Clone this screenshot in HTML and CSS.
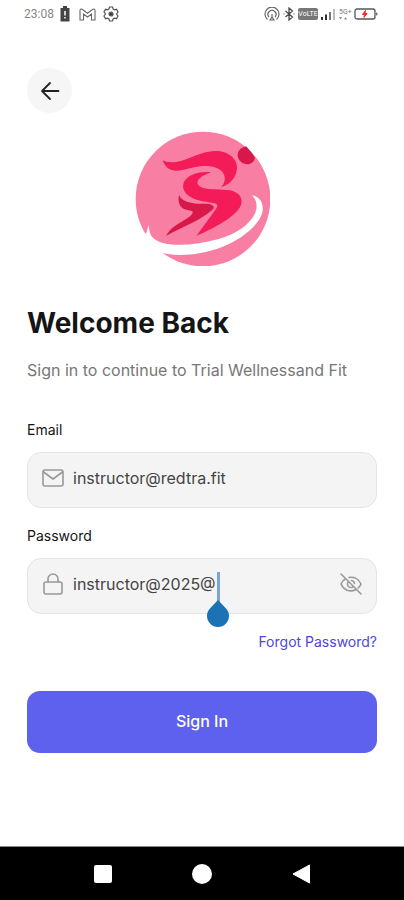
FILE: index.html
```html
<!DOCTYPE html>
<html lang="en">
<head>
    <meta charset="utf-8">
    <meta name="viewport" content="width=device-width, initial-scale=1">
    <title>Sign In</title>
    <link rel="stylesheet" href="styles.css">
</head>
<body>
    <div class="statusbar">
        <div class="status-group">
            <span class="clock">23:08</span>
            <svg width="10" height="16" viewBox="0 0 10 16"><path d="M3 0h4v2h2.500v13.500h-9V2H3z" fill="#444"/><path d="M5 5v4.500M5 11v1.500" stroke="#fff" stroke-width="1.500"/></svg>
            <svg class="mail-icon" width="17" height="13" viewBox="0 0 17 13" fill="none" stroke="#666" stroke-width="1.100"><path d="M1 12V2.500C1 1 2.500.6 3.500 1.500l5 3.700 5-3.700C14.500.6 16 1 16 2.500V12h-3.500V6l-4 3-4-3v6z"/></svg>
            <svg width="16" height="16" viewBox="0 0 16 16" fill="none" stroke="#555" stroke-width="1.200"><path d="M6.500 1h3l.6 2 1.400.8 2-.5L15 6l-1.500 2 1.500 2-1.500 2.700-2-.5-1.400.8-.6 2h-3l-.6-2-1.400-.8-2 .5L1 10l1.500-2L1 6l1.500-2.700 2 .5L5.900 3z"/><circle cx="8" cy="8" r="2" fill="#444"/></svg>
        </div>
        <div class="status-group status-right">
            <svg width="16" height="14" viewBox="0 0 16 14" fill="none" stroke="#666" stroke-width="1.200"><path d="M3.500 12.500a7 7 0 1 1 9 0M5 10a4 4 0 1 1 6 0"/><path d="M8 7v3M6 13l2-3 2 3z"/></svg>
            <svg width="12" height="14" viewBox="0 0 12 14" fill="none" stroke="#444" stroke-width="1.200"><path d="M2.500 4l7 6L6 13V1l3.500 3-7 6M.5 7h1M10.500 7h1"/></svg>
            <span class="volte">VoLTE</span>
            <svg width="15" height="12" viewBox="0 0 15 12"><path d="M0 9h2v3H0zM4 6.500h2V12H4z" fill="#333"/><path d="M8 4h2v8H8z" fill="#777"/><path d="M12 1h2v11h-2z" fill="#bbb"/></svg>
            <span class="network">5G+<svg width="8" height="4" viewBox="0 0 8 4" fill="#888"><path d="M0 1h3L1.500 3.500zM5 3.500h3L6.500 1z"/></svg></span>
            <svg width="25" height="12" viewBox="0 0 25 12"><rect x="1" y="1" width="20" height="10" rx="2" fill="#fff" stroke="#555" stroke-width="1.300"/><path d="M22 4l2 2-2 2z" fill="#777"/><path d="M11.500 2.500L8.500 6.500h2L10 9.500l3-4h-2z" fill="#f22" stroke="#f22"/></svg>
        </div>
    </div>

    <main class="page">
        <button class="back" type="button" aria-label="Back">
            <svg width="20" height="20" viewBox="0 0 20 20" fill="none" stroke="#222" stroke-width="1.800" stroke-linecap="round" stroke-linejoin="round"><path d="M18.500 10H2M10 2L2 10l8 8"/></svg>
        </button>

        <svg class="logo" viewBox="30 30 405 405" role="img" aria-label="Trial Wellness and Fit">
            <circle cx="234" cy="234" r="202" fill="#f87fa3"/>
            <!-- head -->
            <path d="M347 83C355 78 362 76 365 77Q382 95 390 111C388 123 376 131 364 130C349 128 339 117 338 103C338 94 341 87 347 83z" fill="#d81848"/>
            <!-- body -->
            <path d="M113 118C127 126 151 126 177 117C210 105 236 92 267 90C307 88 338 112 336 142C334 170 315 191 288 199C299 187 303 173 296 159C287 140 257 133 226 136C199 139 174 150 151 149C131 148 119 136 113 118z" fill="#f31b58"/>
            <path d="M257 154C243 152 211 153 189 169C171 183 169 204 185 219C202 237 236 242 266 246C281 249 279 258 269 269L214 345C261 324 324 293 345 259C357 236 346 214 315 208C287 203 254 207 233 200C213 193 214 180 226 170C235 162 246 160 257 154z" fill="#f31b58"/>
            <path d="M162 222C158 240 163 258 177 264C185 268 197 268 202 271C206 276 198 285 187 292C163 307 136 319 123 345C169 319 224 301 264 265C273 253 255 247 236 248C203 250 170 242 162 222z" fill="#d81848"/>
            <!-- orbit -->
            <path d="M381 223C402 225 416 244 413 269C408 306 357 352 291 378C223 404 149 408 107 394C79 382 61 360 64 337Q66 325 72 312C71 336 79 351 98 360C134 378 211 374 278 355C333 339 376 310 391 275C399 253 394 236 381 223z" fill="#fff"/>
            <path d="M30 337L64 337Q72 375 112 394L106 435H30z" fill="#fff"/>
        </svg>

        <h1 class="title">Welcome Back</h1>
        <p class="subtitle">Sign in to continue to Trial Wellnessand Fit</p>

        <form class="form">
            <label class="label" for="email">Email</label>
            <div class="field">
                <svg class="icon" viewBox="0 0 22 22"><rect x="1" y="3" width="20" height="16" rx="2"/><path d="M1.500 5l9.500 7 9.500-7"/></svg>
                <input class="input" id="email" type="email" value="instructor@redtra.fit">
            </div>

            <label class="label" for="password">Password</label>
            <div class="field">
                <svg class="icon" viewBox="0 0 22 22"><rect x="2" y="9" width="18" height="12" rx="2"/><path d="M6 9V6a5 5 0 0 1 10 0v3"/></svg>
                <input class="input" id="password" type="text" value="instructor@2025@">
                <button class="toggle" type="button" aria-label="Hide password">
                    <svg class="icon" viewBox="0 0 22 22"><path d="M1 1l20 20M9 4.500C14.500 3.500 19 6.500 21 11c-.6 1.500-1.600 2.900-2.800 4M5.500 5.800C3.500 7 2 8.800 1 11c2.500 6 9 8.500 14.500 5.800M8.500 8.500a3.500 3.500 0 0 0 5 5M11.500 7.500a3.500 3.500 0 0 1 3 3"/></svg>
                </button>
                <span class="caret"></span>
                <svg class="handle" viewBox="0 0 22 27"><path d="M11 0L18.800 8.200a11 11 0 1 1-15.600 0z" fill="#1b72b5"/></svg>
            </div>

            <a class="forgot" href="#">Forgot Password?</a>
            <button class="submit" type="submit">Sign In</button>
        </form>
    </main>

    <nav class="navbar">
        <button class="nav-btn" type="button" aria-label="Recent apps"><svg width="20" height="20" viewBox="0 0 20 20"><rect x="1" y="1" width="18" height="18" rx="2" fill="#fff"/></svg></button>
        <button class="nav-btn" type="button" aria-label="Home"><svg width="20" height="20" viewBox="0 0 20 20"><circle cx="10" cy="10" r="10" fill="#fff"/></svg></button>
        <button class="nav-btn" type="button" aria-label="Back"><svg width="20" height="20" viewBox="0 0 20 20"><path d="M2 10L18.500 1v18z" fill="#fff" stroke="#fff" stroke-linejoin="round"/></svg></button>
    </nav>
</body>
</html>
```

FILE: styles.css
```css
* {
    box-sizing: border-box;
}
body {
    margin: 0;
    min-height: 100vh;
    display: flex;
    flex-direction: column;
    background: #fff;
    color: #151515;
    font-family: Inter, "Open Sans", sans-serif;
}
button {
    border: 0;
    padding: 0;
    font-family: inherit;
    cursor: pointer;
}
svg {
    display: block;
    flex: none;
}

/* phone status bar */
.statusbar {
    display: flex;
    align-items: center;
    justify-content: space-between;
    height: 28px;
    padding: 0 25px 0 24px;
    font-family: Roboto, sans-serif;
}
.status-group {
    display: flex;
    align-items: center;
    gap: 6px;
}
.status-group .mail-icon {
    margin: 0 1px 0 3px;
}
.status-right {
    gap: 3px;
}
.clock {
    color: #888;
    font-size: 12px;
}
.volte {
    width: 20px;
    border-radius: 2px;
    background: #777;
    color: #fff;
    font-size: 7px;
    line-height: 12px;
    text-align: center;
}
.network {
    width: 12px;
    color: #777;
    font-size: 7px;
    line-height: 8px;
}

.page {
    padding: 40px 27px 24px;
}
.back {
    display: flex;
    align-items: center;
    justify-content: center;
    width: 45px;
    height: 45px;
    border-radius: 50%;
    background: #f6f6f6;
}
.logo {
    width: 135px;
    height: 135px;
    margin: 18px auto 0;
}
.title {
    margin: 39px 0 0;
    font-size: 28px;
    line-height: 36px;
    font-weight: 700;
}
.subtitle {
    margin: 18px 0 0;
    color: #777;
    font-size: 16px;
    line-height: 22px;
}

.form {
    display: flex;
    flex-direction: column;
    margin-top: 39px;
}
.label {
    margin-bottom: 12px;
    font-size: 14px;
    line-height: 20px;
}
.field {
    position: relative;
    display: flex;
    align-items: center;
    gap: 9px;
    height: 56px;
    margin-bottom: 18px;
    padding: 0 14px 5px;
    border: 1px solid #e4e4e4;
    border-radius: 14px;
    background: #f4f4f4;
}
.icon {
    width: 22px;
    height: 22px;
    fill: none;
    stroke: #999;
    stroke-width: 1.6;
    stroke-linecap: round;
    stroke-linejoin: round;
}
.input {
    flex: 1;
    min-width: 0;
    padding: 0;
    border: 0;
    outline: 0;
    background: none;
    color: #444;
    font-family: inherit;
    font-size: 16px;
    line-height: 24px;
}
.toggle {
    background: none;
}

/* text cursor and its drag handle */
.caret {
    position: absolute;
    left: 189px;
    top: 13px;
    width: 3px;
    height: 30px;
    background: #7ba6cc;
}
.handle {
    position: absolute;
    left: 179px;
    top: 41px;
    width: 22px;
    height: 27px;
}

.forgot {
    align-self: flex-end;
    color: #5045e0;
    font-size: 14px;
    line-height: 20px;
    text-decoration: none;
}
.submit {
    height: 62px;
    margin-top: 39px;
    padding-bottom: 2px;
    border-radius: 13px;
    background: #5e60ee;
    color: #fff;
    font-size: 16px;
    font-weight: 500;
}

/* phone navigation bar */
.navbar {
    display: flex;
    align-items: center;
    justify-content: center;
    gap: 79px;
    height: 54px;
    margin-top: auto;
    border-top: 1px solid #888;
    background: #000;
}
.nav-btn {
    background: none;
}
```
